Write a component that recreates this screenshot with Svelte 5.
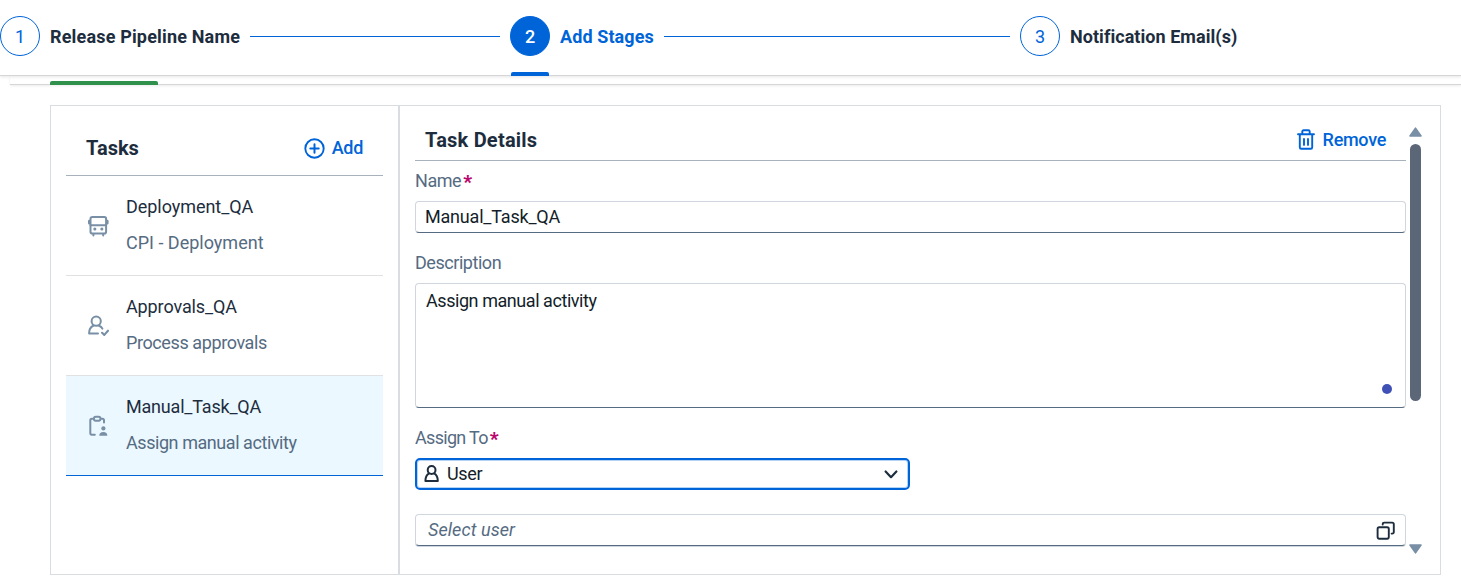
<script>
  const tasks = [
    { name: 'Deployment_QA', kind: 'CPI - Deployment', icon: 'bus', ls: [-0.05, 0] },
    { name: 'Approvals_QA', kind: 'Process approvals', icon: 'approve', ls: [-0.12, -0.4] },
    { name: 'Manual_Task_QA', kind: 'Assign manual activity', icon: 'manual', ls: [-0.2, -0.44] }
  ];
  const selected = 2;
</script>

<header class="wizard">
  <div class="step"><span class="num">1</span><span class="title t1">Release Pipeline Name</span></div>
  <i class="line"></i>
  <div class="step active"><span class="num">2</span><span class="title t2">Add Stages</span></div>
  <i class="line"></i>
  <div class="step last"><span class="num">3</span><span class="title t3">Notification Email(s)</span></div>
</header>
<div class="tabstrip"><div class="tab"></div></div>

<main class="panel">
  <section class="tasks">
    <div class="tasks-head">
      <h2 class="th">Tasks</h2>
      <button class="link add">
        <svg width="21" height="21" viewBox="0 0 21 21" fill="none" stroke="currentColor" stroke-width="2" stroke-linecap="round"><circle cx="10.5" cy="10.5" r="9.2" stroke-width="1.9" /><path d="M10.5 6.3v8.4M6.3 10.5h8.4" stroke-width="2" /></svg>
        <span>Add</span>
      </button>
    </div>
    {#each tasks as t, i}
      <div class="row" class:sel={i === selected}>
        <svg width="22" height="22" viewBox="0 0 22 22" fill="none" stroke="#788fa6" stroke-width="2" stroke-linecap="round" stroke-linejoin="round">
          {#if t.icon === 'bus'}
            <rect x="3.5" y="2" width="15.6" height="16.6" rx="1.8" />
            <path d="M3.5 10.2h15.6" />
            <path d="M2.3 6v2.2M20.3 6v2.2" stroke-width="2.6" />
            <path d="M6.4 19v1.4M16.2 19v1.4" />
            <path d="M7.8 14h.1M14.8 14h.1" stroke-width="3" />
          {:else if t.icon === 'approve'}
            <circle cx="9.2" cy="6.2" r="4.6" />
            <path d="M6.3 10.7C3.6 11.8 2.1 14.2 2.1 18.4H11M12 10.7C13.6 11.3 14.7 12.2 15.4 13.6" />
            <path d="M15.1 17.8L17.3 19.9L21 15.7" stroke-width="2.1" />
          {:else}
            <path d="M5.4 3.7H4.8Q3.3 3.7 3.3 5.3V18.1Q3.3 19.7 4.8 19.7H7.8M14.7 3.7H15.4Q17 3.7 17 5.3V7.4" />
            <rect x="6.9" y="1.8" width="6.6" height="3.9" rx="1.9" />
            <circle cx="16.4" cy="13.4" r="2.1" fill="#788fa6" stroke="none" />
            <path d="M12.3 20.7Q12.3 17 16.3 17T20.3 20.7Z" fill="#788fa6" stroke="none" />
          {/if}
        </svg>
        <div class="txt">
          <div class="name" style:letter-spacing="{t.ls[0]}px">{t.name}</div>
          <div class="kind" style:letter-spacing="{t.ls[1]}px">{t.kind}</div>
        </div>
      </div>
    {/each}
  </section>

  <section class="details">
    <div class="form">
      <div class="form-head">
        <h2 class="td">Task Details</h2>
        <button class="link remove">
          <svg width="18" height="21" viewBox="0 0 18 21" fill="none" stroke="currentColor" stroke-width="1.9" stroke-linecap="round" stroke-linejoin="round"><path d="M1 5.2h16M5.3 5V2.6Q5.3 1.2 6.7 1.2h4.6Q12.7 1.2 12.7 2.6V5M2.8 5.4V18.2Q2.8 19.8 4.2 19.8H13.8Q15.2 19.8 15.2 18.2V5.4" /><path d="M7 9.9v6M11 9.9v6" /></svg>
          <span>Remove</span>
        </button>
      </div>
      <div class="label l1"><span>Name</span><b>*</b></div>
      <div class="field f1">Manual_Task_QA</div>
      <div class="label l2"><span>Description</span></div>
      <div class="field f2">Assign manual activity<i class="dot"></i></div>
      <div class="label l3"><span>Assign To</span><b>*</b></div>
      <div class="select">
        <svg width="15" height="18" viewBox="0 0 15 18" fill="none" stroke="#1d2d3e" stroke-width="2" stroke-linejoin="round"><circle cx="7.6" cy="5" r="3.9" /><path d="M5.2 8.3C2.6 9.6 1.4 11.8 1.4 15.9H13.8C13.8 11.8 12.6 9.6 10 8.3" /></svg>
        <span>User</span>
        <svg class="chev" width="14" height="10" viewBox="0 0 14 10" fill="none" stroke="#1d2d3e" stroke-width="2.2" stroke-linecap="round" stroke-linejoin="round"><path d="M1.6 2.5L7 8.2L12.4 2.5" /></svg>
      </div>
      <div class="field f3">
        <em>Select user</em>
        <svg width="19" height="19" viewBox="0 0 19 19" fill="none" stroke="#1d2d3e" stroke-width="1.9" stroke-linecap="round" stroke-linejoin="round"><rect x="1.6" y="6.3" width="11.2" height="11.4" rx="1.6" /><path d="M6.7 3.6V3Q6.7 1.6 8.2 1.6H16.2Q17.8 1.6 17.8 3.2V11.1Q17.8 12.6 16.2 12.6H15.6" /></svg>
      </div>
    </div>
    <div class="scroll">
      <svg width="13" height="10" viewBox="0 0 13 10"><path d="M6.5 1.2L12 8.9H1Z" fill="#788fa6" stroke="#788fa6" stroke-width="1.6" stroke-linejoin="round" /></svg>
      <div class="thumb"></div>
      <svg class="down" width="13" height="10" viewBox="0 0 13 10"><path d="M6.5 8.8L12 1.1H1Z" fill="#788fa6" stroke="#788fa6" stroke-width="1.6" stroke-linejoin="round" /></svg>
    </div>
  </section>
</main>

<style>
  :global(body) { background: #fff; overflow: hidden; font: 18px/24px Roboto, "Noto Sans", sans-serif; color: #1d2d3e; }
  :global(#app) { height: 580px; }
  * { box-sizing: border-box; }
  h2 { margin: 0; font-size: 20px; line-height: 26px; font-weight: 700; }
  button { font: inherit; border: 0; background: none; padding: 0; }
  svg { flex: none; display: block; }
  .wizard { height: 76px; display: flex; align-items: flex-start; padding-top: 16px; border-bottom: 1px solid #d6d6d8; box-shadow: 0 1px 3px rgba(0, 0, 0, .1); position: relative; background: #fff; z-index: 1; }
  .step { display: flex; align-items: center; height: 60px; padding-bottom: 20px; gap: 10px; position: relative; white-space: nowrap; }
  .num { width: 40px; height: 40px; border: 1px solid #0064d9; border-radius: 50%; color: #0064d9; display: flex; align-items: center; justify-content: center; padding-top: 2px; }
  .title { font-weight: 700; padding-top: 1px; }
  .t1 { width: 190px; letter-spacing: .17px; }
  .t2 { width: 94px; letter-spacing: .1px; }
  .t3 { letter-spacing: .05px; }
  .active .title { color: #0064d9; }
  .active .num { background: #0064d9; color: #fff; font-weight: 500; }
  .active::after { content: ''; position: absolute; left: 1px; bottom: 0; width: 38px; height: 4px; border-radius: 2px 2px 0 0; background: #0064d9; }
  .line { flex: 1 1 auto; height: 1px; background: #0064d9; margin: 20px 10px 0; }
  .wizard .line:nth-of-type(1) { flex: 0 0 250px; }
  .wizard .line:nth-of-type(2) { flex: 0 0 346px; }
  .tabstrip { margin-left: 10px; height: 9px; padding: 5px 0 0 40px; border-bottom: 1px solid #d6d6d8; box-shadow: 0 1px 3px rgba(0, 0, 0, .08); }
  .tab { width: 108px; height: 4px; background: #30914c; border-radius: 2px 2px 0 0; }
  .panel { margin: 20px 20px 0 50px; height: 470px; border: 1px solid #d9dce1; display: flex; }
  .tasks { width: 349px; border-right: 2px solid #d9dce1; padding: 15px 15px 0; }
  .tasks-head { height: 55px; display: flex; justify-content: space-between; align-items: center; padding: 0 20px; border-bottom: 1px solid #a8b2bd; }
  .link { color: #0064d9; font-weight: 500; display: flex; align-items: center; gap: 7px; letter-spacing: -.3px; }
  .remove { gap: 8px; margin-bottom: 2px; }
  .row { height: 100px; display: flex; padding-left: 21px; border-bottom: 1px solid #e0e1e3; align-items: center; gap: 17px; }
  .row.sel { background: #ebf8ff; border-bottom-color: #0064d9; }
  .txt { display: flex; flex-direction: column; gap: 12px; padding-bottom: 1px; white-space: nowrap; }
  .kind { color: #556b82; }
  .details { flex: 1; display: flex; padding: 15px 18px 0 15px; gap: 3px; }
  .form { width: 991px; }
  .form-head { height: 40px; border-bottom: 1px solid #a8b2bd; display: flex; justify-content: space-between; align-items: center; padding: 0 20px 0 10px; }
  .td { margin-bottom: 2px; letter-spacing: .22px; }
  .label { height: 24px; display: flex; color: #556b82; letter-spacing: -.45px; gap: 2px; }
  .label b { color: #ba066c; font-size: 19px; font-weight: 900; padding-top: 1px; }
  .l1 { margin-top: 8px; } .l2 { margin-top: 18px; } .l3 { margin-top: 18px; letter-spacing: -.7px; }
  .field { border: 1px solid #d0d6dd; border-bottom-color: #556b82; border-radius: 4px; color: #131e29; letter-spacing: -.2px; }
  .f1 { height: 32px; margin-top: 8px; padding: 3px 9px; }
  .f2 { height: 125px; margin-top: 8px; padding: 5px 10px; position: relative; letter-spacing: -.44px; }
  .dot { position: absolute; right: 13px; bottom: 13px; width: 10px; height: 10px; border-radius: 50%; background: #3f51b5; }
  .select { width: 495px; height: 32px; margin-top: 8px; border: 2px solid #0064d9; box-shadow: inset 0 0 0 1px #b5d3f5; border-radius: 5px; display: flex; align-items: center; padding: 0 10px 0 7px; color: #131e29; letter-spacing: -.3px; }
  .select span { margin-left: 8px; }
  .chev { margin-left: auto; }
  .f3 { height: 32px; margin-top: 24px; display: flex; align-items: center; justify-content: space-between; padding: 0 10px 0 12px; letter-spacing: .08px; box-shadow: 0 1px 0 #d0d6dd; }
  .f3 em { color: #556b82; }
  .scroll { width: 13px; padding-top: 6px; display: flex; flex-direction: column; align-items: center; }
  .thumb { width: 11px; height: 257px; margin-top: 7px; border-radius: 6px; background: #5b6777; }
  .down { margin-top: 143px; }
</style>
